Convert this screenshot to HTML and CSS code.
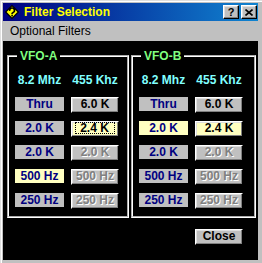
FILE: index.html
```html
<!DOCTYPE html>
<html>
<head>
<meta charset="utf-8">
<link rel="stylesheet" href="styles.css">
</head>
<body>
<div class="window">
  <div class="titlebar">
    <svg class="ticon" width="14" height="14" viewBox="0 0 14 14">
      <path d="M7 0.7 L13.3 7 L7 13.3 L0.7 7Z" fill="#ffff00" stroke="#000" stroke-width="1.2"/>
      <path d="M4.7 5.8 A2.4 2.4 0 1 1 8 7.6 L7.1 8.3 V9.2" fill="none" stroke="#000" stroke-width="1.6"/>
      <rect x="6.3" y="9.9" width="1.6" height="1.6" fill="#000"/>
    </svg>
    <span class="title">Filter Selection</span>
    <div class="capbtns">
      <span class="capbtn q">?</span>
      <span class="capbtn">
        <svg width="8" height="7" viewBox="0 0 8 7"><path d="M0.5 0.5 L7.5 6.5 M7.5 0.5 L0.5 6.5" stroke="#000" stroke-width="1.6"/></svg>
      </span>
    </div>
  </div>
  <div class="menubar"><span class="menu">Optional Filters</span></div>
  <div class="client">
    <div class="groups">
      <fieldset class="group group-a">
        <legend>VFO-A</legend>
        <div class="grid">
          <div class="freq">8.2 Mhz</div><div class="freq">455 Khz</div>
          <div class="lbl">Thru</div><div class="btn">6.0 K</div>
          <div class="lbl">2.0 K</div><div class="btn yellow"><span class="focus">2.4 K</span></div>
          <div class="lbl">2.0 K</div><div class="btn dis">2.0 K</div>
          <div class="lbl yellow">500 Hz</div><div class="btn dis">500 Hz</div>
          <div class="lbl">250 Hz</div><div class="btn dis">250 Hz</div>
        </div>
      </fieldset>
      <fieldset class="group group-b">
        <legend>VFO-B</legend>
        <div class="grid">
          <div class="freq">8.2 Mhz</div><div class="freq">455 Khz</div>
          <div class="lbl">Thru</div><div class="btn">6.0 K</div>
          <div class="lbl yellow">2.0 K</div><div class="btn yellow">2.4 K</div>
          <div class="lbl">2.0 K</div><div class="btn dis">2.0 K</div>
          <div class="lbl">500 Hz</div><div class="btn dis">500 Hz</div>
          <div class="lbl">250 Hz</div><div class="btn dis">250 Hz</div>
        </div>
      </fieldset>
    </div>
    <div class="footer"><div class="btn close">Close</div></div>
  </div>
</div>
</body>
</html>
```
FILE: styles.css
```css
body {
  margin: 0;
  background: #c0c0c0;
  font-family: "Liberation Sans", Arial, sans-serif;
  font-size: 12px;
}
.window {
  width: 262px;
  height: 263px;
  box-sizing: border-box;
  border-left: 1px solid #dfdfdf;
  border-top: 1px solid #dfdfdf;
  box-shadow: inset 1px 1px #ffffff;
  padding: 2px 4px 3px 2px;
  display: flex;
  flex-direction: column;
  background: #c0c0c0;
}
.titlebar {
  height: 18px;
  flex: none;
  display: flex;
  align-items: center;
  padding-left: 2px;
  background: linear-gradient(to right, #000080, #1084d0);
}
.ticon { flex: none; margin-right: 5px; }
.title {
  flex: 1;
  color: #ffff00;
  font-weight: bold;
  font-size: 12px;
  line-height: 14px;
}
.capbtns { display: flex; gap: 2px; margin-right: 1px; }
.capbtn {
  width: 16px;
  height: 14px;
  box-sizing: border-box;
  background: #c0c0c0;
  border: 1px solid;
  border-color: #ffffff #000000 #000000 #ffffff;
  box-shadow: inset -1px -1px #808080, inset 1px 1px #dfdfdf;
  display: flex;
  align-items: center;
  justify-content: center;
  color: #000;
  font-weight: bold;
  font-size: 11px;
  line-height: 11px;
}
.menubar {
  height: 20px;
  flex: none;
  display: flex;
  align-items: center;
  padding-left: 7px;
  color: #000;
}
.client {
  flex: 1;
  background: #000;
  display: flex;
  flex-direction: column;
}
.groups {
  display: flex;
  gap: 2px;
  padding-left: 4px;
  margin-top: 8px;
}
.group {
  margin: 0;
  padding: 0 0 8px 0;
  border: 2px groove #ffffff;
  box-sizing: border-box;
  min-width: 0;
}
.group-a { width: 122px; }
.group-b { width: 125px; }
legend {
  margin-left: 8px;
  padding: 0 3px;
  color: #80ff80;
  font-weight: bold;
  font-size: 12px;
  line-height: 14px;
}
.grid {
  display: grid;
  grid-template-columns: 49px 48px;
  column-gap: 7px;
  row-gap: 9px;
  grid-auto-rows: 15px;
  padding: 10px 0 0 6px;
  font-weight: bold;
}
.freq {
  color: #80ffff;
  text-align: center;
  line-height: 15px;
}
.lbl {
  height: 14px;
  background: #c0c0c0;
  color: #000080;
  text-align: center;
  line-height: 14px;
}
.lbl.yellow { background: #ffffc0; }
.btn {
  height: 16px;
  box-sizing: border-box;
  background: #c0c0c0;
  border: 1px solid;
  border-color: #ffffff #000000 #000000 #ffffff;
  box-shadow: inset -1px -1px #808080, inset 1px 1px #dfdfdf;
  text-align: center;
  line-height: 13px;
  color: #000;
  font-weight: bold;
}
.btn.yellow { background: #ffffc0; }
.btn.dis {
  color: #808080;
  text-shadow: 1px 1px #ffffff;
}
.focus {
  display: inline-block;
  line-height: 10px;
  padding: 0 5px 0 4px;
  border: 1px dotted #000;
}
.footer {
  display: flex;
  justify-content: flex-end;
  padding-right: 15px;
  margin-top: 11px;
}
.close { width: 48px; }
```
